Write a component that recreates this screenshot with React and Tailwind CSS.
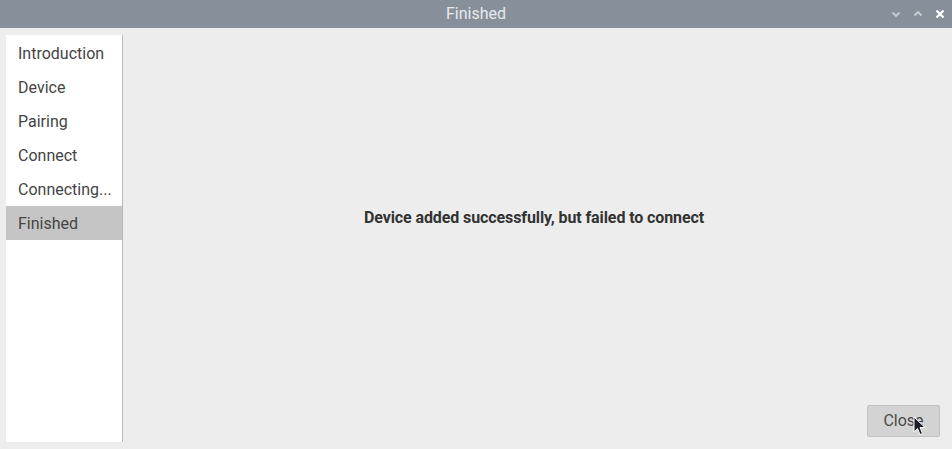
import React from 'react';

const steps = ['Introduction', 'Device', 'Pairing', 'Connect', 'Connecting...', 'Finished'];

export default function App() {
  return (
    <div className="w-[952px] h-[449px] flex flex-col bg-[#ededed] overflow-hidden" style={{ fontFamily: 'Roboto, sans-serif' }}>
      {/* Title bar */}
      <div className="relative h-[28px] shrink-0 bg-[#87909a] flex items-center justify-center">
        <span className="text-[16px] text-[#e8eaec]">Finished</span>
        <div className="absolute right-[6px] top-0 h-[28px] flex items-center gap-[10px]">
          <svg width="12" height="12" viewBox="0 0 12 12"><path d="M2.5 4.5 L6 8 L9.5 4.5" stroke="#c9ced3" strokeWidth="1.8" fill="none" /></svg>
          <svg width="12" height="12" viewBox="0 0 12 12"><path d="M2.5 7.5 L6 4 L9.5 7.5" stroke="#c9ced3" strokeWidth="1.8" fill="none" /></svg>
          <svg width="12" height="12" viewBox="0 0 12 12"><path d="M2.5 2.5 L9.5 9.5 M9.5 2.5 L2.5 9.5" stroke="#ffffff" strokeWidth="2.2" fill="none" /></svg>
        </div>
      </div>

      <div className="flex flex-1 min-h-0 pt-[7px] pb-[7px] pl-[6px]">
        {/* Sidebar */}
        <div className="w-[117px] shrink-0 bg-white border-r border-[#b8b8b8] flex flex-col pt-[1px]">
          {steps.map((s) => (
            <div
              key={s}
              className={`h-[34px] flex items-center pl-[12px] pt-[2px] text-[16px] text-[#444444] ${s === 'Finished' ? 'bg-[#c4c5c4]' : ''}`}
            >
              {s}
            </div>
          ))}
        </div>

        {/* Content */}
        <div className="flex-1 flex flex-col">
          <div className="flex-1 flex items-center justify-center pb-[4px] pr-[7px]">
            <span className="text-[16px] font-bold text-[#333333] tracking-[-0.1px]">Device added successfully, but failed to connect</span>
          </div>
          <div className="h-[32px] mb-[5px] flex justify-end pr-[12px]">
            <button className="relative w-[73px] h-[32px] bg-[#d3d3d3] border border-[#c2c2c2] rounded-[2px] text-[16px] text-[#4a4a4a]">
              Close
              <svg className="absolute left-[45px] top-[10px]" width="13" height="20" viewBox="0 0 13 20">
                <path d="M1 1 L1 16 L4.5 12.5 L7 18.5 L9.5 17.5 L7 11.5 L12 11.5 Z" fill="#1c1c2a" stroke="#ffffff" strokeWidth="1" />
              </svg>
            </button>
          </div>
        </div>
      </div>
    </div>
  );
}
